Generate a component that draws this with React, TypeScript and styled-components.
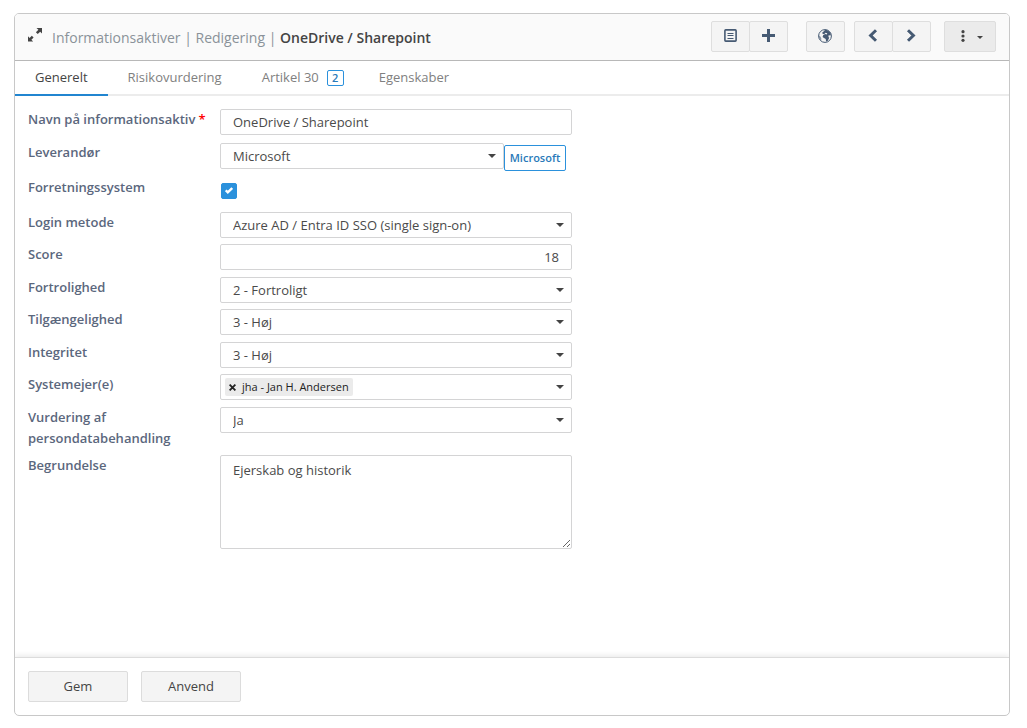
import React, { useState } from 'react';
import styled, { createGlobalStyle, css } from 'styled-components';

const GlobalStyle = createGlobalStyle`
  *, *::before, *::after { box-sizing: border-box; }
  body {
    margin: 0;
    background: #fff;
    color: #444;
    font: 13px/21px "Open Sans", "Noto Sans", sans-serif;
  }
  button, input, select, textarea { font: inherit; color: inherit; margin: 0; }
`;

const Page = styled.main`
  display: flex;
  min-height: 100vh;
  padding: 13px 17px 12px 14px;
`;

const Panel = styled.section`
  flex: 1;
  min-width: 0;
  display: flex;
  flex-direction: column;
  border: 1px solid #c8c8c8;
  border-radius: 5px;
  overflow: hidden;
`;

const Header = styled.header`
  display: flex;
  align-items: center;
  justify-content: space-between;
  padding: 7px 13px 8px;
  background: #fafafa;
  border-bottom: 1px solid #b8b8b8;
`;

const TitleBar = styled.div`
  display: flex;
  align-items: center;
  gap: 10px;
`;

const IconButton = styled.button`
  display: flex;
  padding: 0;
  border: 0;
  background: none;
  color: #444;
  svg { margin-bottom: 3px; }
`;

const Title = styled.h1`
  margin: 2px 0 0;
  font-size: 14px;
  line-height: 21px;
  font-weight: 400;
  color: #8a9299;
  strong { font-weight: 600; color: #444; }
`;

const Toolbar = styled.div`
  display: flex;
`;

const ButtonGroup = styled.div<{ $gap?: number }>`
  display: flex;
  margin-left: ${({ $gap = 0 }) => $gap}px;
`;

const ToolButton = styled.button<{ $menu?: boolean }>`
  display: flex;
  align-items: center;
  justify-content: center;
  gap: 12px;
  width: ${({ $menu }) => ($menu ? 52 : 39)}px;
  height: 31px;
  padding: ${({ $menu }) => ($menu ? '0 0 2px 3px' : '0 1px 2px 0')};
  border: 1px solid #dedede;
  border-radius: 2px;
  background: ${({ $menu }) => ($menu ? '#ebebeb' : '#f4f4f4')};
  color: ${({ $menu }) => ($menu ? '#444' : '#465a73')};
  & + & { margin-left: -1px; }
`;

const Tabs = styled.nav`
  display: flex;
  border-bottom: 2px solid #ececec;
`;

const Tab = styled.a<{ $active?: boolean; $counted?: boolean }>`
  display: flex;
  align-items: center;
  gap: 8px;
  height: 35px;
  margin-bottom: -2px;
  padding: 0 ${({ $counted }) => ($counted ? 15 : 20)}px 0 20px;
  border-bottom: 2px solid transparent;
  color: #808080;
  text-decoration: none;
  ${({ $active }) => $active && css`
    color: #444;
    border-color: #2185d0;
  `}
`;

const Badge = styled.span`
  padding: 0 4px;
  border: 1px solid #2b91dc;
  border-radius: 2px;
  color: #2a7ab9;
  font-size: 11px;
  line-height: 14px;
  min-width: 17px;
  text-align: center;
  font-weight: 600;
`;

const Form = styled.form`
  flex: 1;
  display: flex;
  flex-direction: column;
`;

const Fields = styled.div`
  flex: 1;
  width: 100%;
  max-width: 570px;
  padding: 13px;
`;

const Row = styled.div`
  display: grid;
  grid-template-columns: 192px minmax(0, 1fr);
  align-items: start;
  padding-bottom: 6px;
  &:nth-child(odd) { padding-bottom: 7px; }
`;

const Label = styled.label`
  font-weight: 600;
  color: #5b677d;
`;

const Required = styled.span`
  color: #f00;
  margin-left: 3px;
`;

const fieldBox = css`
  width: 100%;
  height: 26px;
  border: 1px solid #d4d4d5;
  border-radius: 2px;
  background: #fff;
  color: #4a4a4a;
`;

const TextInput = styled.input<{ $numeric?: boolean }>`
  ${fieldBox}
  display: block;
  padding: 0 12px;
  text-align: ${({ $numeric }) => ($numeric ? 'right' : 'left')};
`;

const TextArea = styled.textarea`
  ${fieldBox}
  display: block;
  height: 94px;
  padding: 4px 12px;
  resize: vertical;
`;

const caret = css`
  position: relative;
  &::after {
    content: '';
    position: absolute;
    right: 8px;
    top: 11px;
    border: 4px solid transparent;
    border-top-color: #444;
    border-bottom: 0;
    pointer-events: none;
  }
`;

const SelectWrap = styled.div`
  ${caret}
  flex: 1;
  min-width: 0;
`;

const NativeSelect = styled.select`
  ${fieldBox}
  display: block;
  appearance: none;
  padding: 1px 24px 0 12px;
`;

const SupplierGroup = styled.div`
  display: flex;
  align-items: flex-start;
  padding: 1px 6px 0 0;
`;

const SupplierLink = styled.a`
  display: flex;
  justify-content: center;
  width: 62px;
  height: 26px;
  margin-top: 2px;
  border: 1px solid #2b91dc;
  border-radius: 2px;
  color: #2a7ab9;
  font-size: 11px;
  line-height: 24px;
  font-weight: 600;
  text-decoration: none;
`;

const CheckCell = styled.div`
  display: grid;
  justify-content: start;
  height: 28px;
  padding: 6px 1px;
  svg { grid-area: 1 / 1; margin: 4px; color: #fff; pointer-events: none; }
`;

const Checkbox = styled.input`
  grid-area: 1 / 1;
  appearance: none;
  width: 16px;
  height: 16px;
  border: 1px solid #2b91dc;
  border-radius: 2px;
  &:checked { background: #2b91dc; }
`;

const TagField = styled.div`
  ${fieldBox}
  ${caret}
  display: flex;
  align-items: center;
  padding: 0 24px 0 4px;
  &::after { right: 7px; top: 10px; }
`;

const Tag = styled.span`
  display: flex;
  align-items: center;
  gap: 6px;
  height: 18px;
  padding: 0 4px;
  border-radius: 2px;
  background: #ebebeb;
  color: #222;
  font-size: 11px;
  line-height: 16px;
  white-space: nowrap;
`;

const TagRemove = styled.button`
  display: flex;
  padding: 0;
  border: 0;
  background: none;
`;

const TagInput = styled.input`
  flex: 1;
  min-width: 0;
  padding: 0;
  border: 0;
  outline: 0;
  background: none;
`;

const Footer = styled.footer`
  display: flex;
  gap: 13px;
  padding: 13px;
  border-top: 1px solid #dcdcdc;
  box-shadow: 0 -2px 5px rgba(0, 0, 0, 0.08);
`;

const ActionButton = styled.button`
  width: 100px;
  height: 31px;
  padding: 0;
  border: 1px solid #dcdcdc;
  border-radius: 2px;
  background: #f4f4f4;
`;

const ExpandIcon = () => (
  <svg width="14" height="14" viewBox="0 0 14 14" fill="currentColor" aria-hidden="true">
    <path d="M8.500 0H14v5.500l-1.800-1.800-2.500 2.400-1.800-1.800 2.500-2.500zM0 13.500V8.300l1.600 1.600 2.200-2.200 1.800 1.800-2.200 2.200 1.800 1.800z" />
  </svg>
);

const ListIcon = () => (
  <svg width="13" height="13" viewBox="0 0 13 13" fill="none" stroke="currentColor" aria-hidden="true">
    <rect x="0.900" y="0.900" width="11.200" height="11.200" rx="0.800" strokeWidth="1.600" />
    <path d="M3.500 4.500h6M3.500 6.500h6M3.500 9.500h6" />
  </svg>
);

const PlusIcon = () => (
  <svg width="13" height="13" viewBox="0 0 13 13" fill="currentColor" aria-hidden="true">
    <path d="M5 0h3v5h5v3H8v5H5V8H0V5h5z" />
  </svg>
);

const GlobeIcon = () => (
  <svg width="14" height="14" viewBox="0 0 14 14" aria-hidden="true">
    <circle cx="7" cy="7" r="6.400" fill="none" stroke="currentColor" />
    <path
      fill="currentColor"
      d="M7 .8c2.600 0 5 1.600 5.900 4.200l-.6 1.800-1.500-.8-.4 1.900.9.800-1.700 3.400-1.500.5-.4-2.600L6 9 4.600 7.900l.6-2 2-.9 1.500.5.6-1.300-1.700-.4L6.400 5 4.600 4.900 4.400 3.200 6 2.300z"
    />
    <path fill="currentColor" d="M1 6.500l1.600 1.300.8 1.900-.4 1.800C1.700 10.400.9 8.500 1 6.500z" opacity=".6" />
  </svg>
);

const ChevronIcon = ({ back }: { back?: boolean }) => (
  <svg width="10" height="13" viewBox="0 0 10 13" fill="none" stroke="currentColor" strokeWidth="3" aria-hidden="true">
    <path d={back ? 'M8 1.200 2.600 6.500l5.400 5.300' : 'M2 1.200 7.400 6.500l-5.400 5.300'} />
  </svg>
);

const MenuIcon = () => (
  <svg width="4" height="12" viewBox="0 0 4 12" fill="currentColor" aria-hidden="true">
    <circle cx="2" cy="1.700" r="1.600" />
    <circle cx="2" cy="6" r="1.600" />
    <circle cx="2" cy="10.300" r="1.600" />
  </svg>
);

const SmallCaret = styled.span`
  margin-top: 4px;
  border: 3px solid transparent;
  border-top-color: currentColor;
  border-bottom: 0;
`;

const CheckIcon = () => (
  <svg width="8" height="7" viewBox="0 0 8 7" fill="none" stroke="currentColor" strokeWidth="2.400" aria-hidden="true">
    <path d="M.8 3.300l2 2L7.200 1" />
  </svg>
);

const CrossIcon = () => (
  <svg width="7" height="7" viewBox="0 0 7 7" stroke="currentColor" strokeWidth="1.800" aria-hidden="true">
    <path d="M.6.6l5.800 5.800M6.400.6L.6 6.400" />
  </svg>
);

const Dropdown = ({ id, value }: { id: string; value: string }) => (
  <SelectWrap>
    <NativeSelect id={id} defaultValue={value}>
      <option>{value}</option>
    </NativeSelect>
  </SelectWrap>
);

const SelectRow = ({ id, label, value }: { id: string; label: string; value: string }) => (
  <Row>
    <Label htmlFor={id}>{label}</Label>
    <Dropdown id={id} value={value} />
  </Row>
);

export default function App() {
  const [business, setBusiness] = useState(true);
  const [owners, setOwners] = useState(['jha - Jan H. Andersen']);

  return (
    <Page>
      <GlobalStyle />
      <Panel>
        <Header>
          <TitleBar>
            <IconButton type="button" aria-label="Udvid"><ExpandIcon /></IconButton>
            <Title>Informationsaktiver | Redigering | <strong>OneDrive / Sharepoint</strong></Title>
          </TitleBar>
          <Toolbar>
            <ButtonGroup>
              <ToolButton type="button" aria-label="Liste"><ListIcon /></ToolButton>
              <ToolButton type="button" aria-label="Ny"><PlusIcon /></ToolButton>
            </ButtonGroup>
            <ButtonGroup $gap={18}>
              <ToolButton type="button" aria-label="Sprog"><GlobeIcon /></ToolButton>
            </ButtonGroup>
            <ButtonGroup $gap={9}>
              <ToolButton type="button" aria-label="Forrige"><ChevronIcon back /></ToolButton>
              <ToolButton type="button" aria-label="Næste"><ChevronIcon /></ToolButton>
            </ButtonGroup>
            <ButtonGroup $gap={13}>
              <ToolButton type="button" $menu aria-label="Menu"><MenuIcon /><SmallCaret /></ToolButton>
            </ButtonGroup>
          </Toolbar>
        </Header>
        <Tabs>
          <Tab href="#generelt" $active aria-current="page">Generelt</Tab>
          <Tab href="#risikovurdering">Risikovurdering</Tab>
          <Tab href="#artikel30" $counted>Artikel 30 <Badge>2</Badge></Tab>
          <Tab href="#egenskaber">Egenskaber</Tab>
        </Tabs>
        <Form onSubmit={(e) => e.preventDefault()}>
          <Fields>
            <Row>
              <Label htmlFor="name">Navn på informationsaktiv<Required>*</Required></Label>
              <TextInput id="name" defaultValue="OneDrive / Sharepoint" required />
            </Row>
            <Row>
              <Label htmlFor="supplier">Leverandør</Label>
              <SupplierGroup>
                <Dropdown id="supplier" value="Microsoft" />
                <SupplierLink href="#microsoft">Microsoft</SupplierLink>
              </SupplierGroup>
            </Row>
            <Row>
              <Label htmlFor="business">Forretningssystem</Label>
              <CheckCell>
                <Checkbox id="business" type="checkbox" checked={business} onChange={(e) => setBusiness(e.target.checked)} />
                {business && <CheckIcon />}
              </CheckCell>
            </Row>
            <SelectRow id="login" label="Login metode" value="Azure AD / Entra ID SSO (single sign-on)" />
            <Row>
              <Label htmlFor="score">Score</Label>
              <TextInput id="score" $numeric inputMode="numeric" defaultValue="18" />
            </Row>
            <SelectRow id="confidentiality" label="Fortrolighed" value="2 - Fortroligt" />
            <SelectRow id="availability" label="Tilgængelighed" value="3 - Høj" />
            <SelectRow id="integrity" label="Integritet" value="3 - Høj" />
            <Row>
              <Label htmlFor="owners">Systemejer(e)</Label>
              <TagField>
                {owners.map((owner) => (
                  <Tag key={owner}>
                    <TagRemove type="button" aria-label={`Fjern ${owner}`} onClick={() => setOwners(owners.filter((o) => o !== owner))}>
                      <CrossIcon />
                    </TagRemove>
                    {owner}
                  </Tag>
                ))}
                <TagInput id="owners" />
              </TagField>
            </Row>
            <SelectRow id="assessment" label="Vurdering af persondatabehandling" value="Ja" />
            <Row>
              <Label htmlFor="reason">Begrundelse</Label>
              <TextArea id="reason" defaultValue="Ejerskab og historik" />
            </Row>
          </Fields>
          <Footer>
            <ActionButton type="submit">Gem</ActionButton>
            <ActionButton type="button">Anvend</ActionButton>
          </Footer>
        </Form>
      </Panel>
    </Page>
  );
}
